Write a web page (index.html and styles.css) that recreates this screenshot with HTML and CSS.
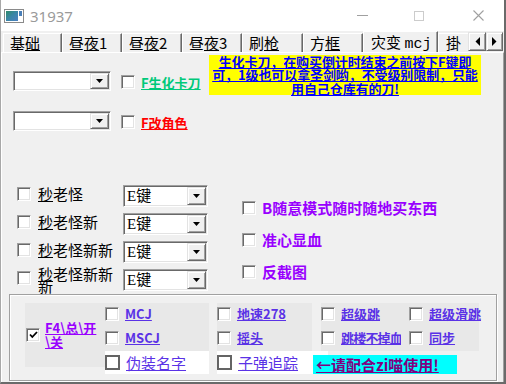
FILE: index.html
```html
<!DOCTYPE html>
<html>
<head>
<meta charset="utf-8">
<link rel="stylesheet" href="styles.css">
</head>
<body>
<div class="window">
  <div class="titlebar">
    <svg class="app-icon" width="20" height="14" viewBox="0 0 20 14">
      <defs>
        <linearGradient id="ig" x1="0" y1="0" x2="1" y2="1">
          <stop offset="0" stop-color="#2f8a6a"/>
          <stop offset="0.5" stop-color="#3a86a8"/>
          <stop offset="1" stop-color="#4c7fc0"/>
        </linearGradient>
      </defs>
      <rect x="0.5" y="0.5" width="19" height="13" fill="#fff" stroke="#8a8a8a"/>
      <rect x="2" y="2" width="12" height="10" fill="url(#ig)"/>
      <rect x="15" y="2" width="3" height="5" fill="#4a7fb8"/>
    </svg>
    <span class="title">31937</span>
    <div class="caption">
      <span class="cap-min"></span>
      <span class="cap-max"></span>
      <svg class="cap-close" width="11" height="11" viewBox="0 0 11 11"><path d="M0.5 0.5L10.5 10.5M10.5 0.5L0.5 10.5" stroke="#a0a0a0" stroke-width="1.1"/></svg>
    </div>
  </div>

  <div class="tabstrip">
    <div class="tab t59">基<u>础</u></div>
    <div class="tab">昼<u>夜</u>1</div>
    <div class="tab">昼<u>夜</u>2</div>
    <div class="tab">昼<u>夜</u>3</div>
    <div class="tab t61">刷<u>枪</u></div>
    <div class="tab">方<u>框</u></div>
    <div class="tab active">灾变 <span class="mono">mcj</span></div>
    <div class="tab partial">掛</div>
    <div class="scroller">
      <span class="sbtn"><svg width="5" height="9" viewBox="0 0 5 9"><path d="M5 0L0.5 4.5L5 9Z" fill="#000"/></svg></span>
      <span class="sbtn"><svg width="5" height="9" viewBox="0 0 5 9"><path d="M0 0L4.5 4.5L0 9Z" fill="#000"/></svg></span>
    </div>
  </div>

  <div class="panel">
    <div class="sec-top">
      <div class="combo-col">
        <div class="combo-row">
          <div class="combo sm"><span class="combo-text"></span><span class="combo-btn"><svg width="7" height="4" viewBox="0 0 7 4"><path d="M0 0H7L3.5 4Z" fill="#000"/></svg></span></div>
          <span class="cb"></span>
          <span class="lbl bold u green">F生化卡刀</span>
        </div>
        <div class="combo-row">
          <div class="combo sm"><span class="combo-text"></span><span class="combo-btn"><svg width="7" height="4" viewBox="0 0 7 4"><path d="M0 0H7L3.5 4Z" fill="#000"/></svg></span></div>
          <span class="cb"></span>
          <span class="lbl bold u red">F改角色</span>
        </div>
      </div>
      <div class="note">生化卡刀，在购买倒计时结束之前按下F键即<br>可，1级也可以拿圣剑哟，不受级别限制，只能<br>用自己仓库有的刀!</div>
    </div>

    <div class="sec-mid">
      <div class="keys">
        <div class="key-row">
          <span class="cb"></span>
          <span class="klbl"><u>秒</u>老怪</span>
          <div class="combo key"><span class="combo-text">E键</span><span class="combo-btn"><svg width="7" height="4" viewBox="0 0 7 4"><path d="M0 0H7L3.5 4Z" fill="#000"/></svg></span></div>
        </div>
        <div class="key-row">
          <span class="cb"></span>
          <span class="klbl"><u>秒</u>老怪新</span>
          <div class="combo key"><span class="combo-text">E键</span><span class="combo-btn"><svg width="7" height="4" viewBox="0 0 7 4"><path d="M0 0H7L3.5 4Z" fill="#000"/></svg></span></div>
        </div>
        <div class="key-row">
          <span class="cb"></span>
          <span class="klbl"><u>秒</u>老怪新新</span>
          <div class="combo key"><span class="combo-text">E键</span><span class="combo-btn"><svg width="7" height="4" viewBox="0 0 7 4"><path d="M0 0H7L3.5 4Z" fill="#000"/></svg></span></div>
        </div>
        <div class="key-row last">
          <span class="cb"></span>
          <span class="klbl tight"><u>秒</u>老怪新新新</span>
          <div class="combo key"><span class="combo-text">E键</span><span class="combo-btn"><svg width="7" height="4" viewBox="0 0 7 4"><path d="M0 0H7L3.5 4Z" fill="#000"/></svg></span></div>
        </div>
      </div>
      <div class="opts">
        <div class="opt-row"><span class="cb"></span><span class="olbl">B随意模式随时随地买东西</span></div>
        <div class="opt-row"><span class="cb"></span><span class="olbl">准心显血</span></div>
        <div class="opt-row"><span class="cb"></span><span class="olbl">反截图</span></div>
      </div>
    </div>

    <div class="group">
      <div class="f4">
        <span class="cb checked"><svg width="9" height="8" viewBox="0 0 9 8"><path d="M1 3.5L3.3 6L8 1" fill="none" stroke="#000" stroke-width="1.8"/></svg></span>
        <span class="f4lbl">F4\总\开<br>\关</span>
      </div>
      <div class="grid">
        <div class="cell c1"><span class="cb"></span><span class="glbl">MCJ</span></div>
        <div class="cell c2"><span class="cb"></span><span class="glbl">地速278</span></div>
        <div class="cell c3"><span class="cb"></span><span class="glbl">超级跳</span></div>
        <div class="cell c4"><span class="cb"></span><span class="glbl">超级滑跳</span></div>
        <div class="cell c1"><span class="cb"></span><span class="glbl">MSCJ</span></div>
        <div class="cell c2"><span class="cb"></span><span class="glbl">摇头</span></div>
        <div class="cell c3"><span class="cb"></span><span class="glbl narrow">跳楼不掉血</span></div>
        <div class="cell c4"><span class="cb"></span><span class="glbl">同步</span></div>
        <div class="wcell w1"><span class="fcb"></span><span class="wlbl">伪装名字</span></div>
        <div class="wcell w2"><span class="fcb"></span><span class="wlbl">子弹追踪</span></div>
        <div class="hint">←请配合zi喵使用!</div>
      </div>
    </div>
  </div>
</div>
</body>
</html>
```

FILE: styles.css
```css
* { box-sizing: border-box; }
html, body { margin: 0; padding: 0; }
body {
  width: 506px;
  height: 384px;
  overflow: hidden;
  background: #ffffff;
  font-family: "Noto Sans CJK SC", sans-serif;
}

.window {
  width: 506px;
  height: 384px;
  display: flex;
  flex-direction: column;
  background: #f0f0f0;
  border-left: 1px solid #a8a8a8;
  border-right: 2px solid #6a6a6a;
  border-bottom: 2px solid #6a6a6a;
  overflow: hidden;
}

/* title bar */
.titlebar {
  height: 31px;
  flex: none;
  background: #ffffff;
  display: flex;
  align-items: center;
}
.app-icon { margin-left: 3px; flex: none; }
.title {
  margin-left: 6px;
  font-family: "Noto Sans", sans-serif;
  font-size: 15px;
  color: #9a9a9a;
  line-height: 18px;
}
.caption {
  margin-left: auto;
  margin-right: 20px;
  display: flex;
  align-items: center;
}
.cap-min { width: 11px; height: 1px; background: #a0a0a0; }
.cap-max { width: 10px; height: 10px; border: 1px solid #cccccc; margin-left: 46px; }
.cap-close { margin-left: 49px; display: block; }

/* tabs */
.tabstrip {
  height: 21px;
  flex: none;
  display: flex;
  align-items: flex-end;
  padding-left: 2px;
  overflow: hidden;
}
.tab {
  width: 60px;
  height: 19px;
  flex: none;
  border-top: 1px solid #ffffff;
  border-left: 1px solid #ffffff;
  border-right: 1px solid #696969;
  box-shadow: inset -1px 0 #a0a0a0;
  background: #f0f0f0;
  font-size: 15px;
  line-height: 17px;
  padding-left: 6px;
  color: #000;
  white-space: nowrap;
  overflow: hidden;
}
.tab u { text-underline-offset: 1px; }
.tab.t59 { width: 59px; }
.tab.t61 { width: 61px; }
.tab.active {
  width: 75px;
  height: 21px;
  padding-left: 7px;
  padding-top: 1px;
}
.tab.partial { width: 30px; padding-left: 7px; border-right: none; box-shadow: none; }
.mono { font-family: "Liberation Mono", monospace; font-size: 15px; }
.scroller {
  display: flex;
  flex: none;
  height: 19px;
  margin-bottom: 1px;
}
.sbtn {
  width: 18px;
  height: 19px;
  background: #f0f0f0;
  border: 1px solid;
  border-color: #e3e3e3 #696969 #696969 #e3e3e3;
  box-shadow: inset 1px 1px #ffffff, inset -1px -1px #a0a0a0;
  display: flex;
  align-items: center;
  justify-content: center;
}
.sbtn + .sbtn { width: 17px; }

/* panel */
.panel {
  flex: 1;
  border-top: 1px solid #ffffff;
  border-left: 1px solid #ffffff;
  border-right: 1px solid #a0a0a0;
  display: flex;
  flex-direction: column;
}

/* classic controls */
.cb {
  width: 14px;
  height: 14px;
  flex: none;
  background: #ffffff;
  border: 1px solid;
  border-color: #a0a0a0 #ffffff #ffffff #a0a0a0;
  box-shadow: inset 1px 1px #696969, inset -1px -1px #e3e3e3;
  display: flex;
  align-items: center;
  justify-content: center;
}
.fcb {
  width: 15px;
  height: 15px;
  flex: none;
  border: 2px solid #646464;
  background: #ffffff;
}
.combo {
  display: flex;
  flex: none;
  background: #ffffff;
  border: 1px solid;
  border-color: #a0a0a0 #ffffff #ffffff #a0a0a0;
  box-shadow: inset 1px 1px #696969, inset -1px -1px #e3e3e3;
}
.combo-text {
  flex: 1;
  padding-left: 3px;
  font-family: "Liberation Serif", "Noto Sans CJK SC", serif;
  font-size: 15px;
  line-height: 20px;
  color: #000;
}
.combo-btn {
  width: 19px;
  margin: 1px;
  flex: none;
  background: #f0f0f0;
  border: 1px solid;
  border-color: #e3e3e3 #696969 #696969 #e3e3e3;
  box-shadow: inset 1px 1px #ffffff, inset -1px -1px #a0a0a0;
  display: flex;
  align-items: center;
  justify-content: center;
}
.combo-btn svg { display: block; }

.lbl { font-size: 13px; line-height: 18px; white-space: nowrap; }
.bold { font-weight: 700; }
.u { text-decoration: underline; }
.green { color: #00c97a; }
.red { color: #ff0000; }

/* top section */
.sec-top { display: flex; height: 80px; flex: none; }
.combo-col { width: 207px; padding-left: 11px; padding-top: 18px; flex: none; }
.combo-row { display: flex; align-items: flex-start; height: 40px; }
.combo.sm { width: 98px; height: 20px; }
.combo-row .cb { margin-left: 10px; margin-top: 4px; }
.combo-row .lbl { margin-left: 6px; margin-top: 3px; }
.note {
  margin-top: 2px;
  width: 272px;
  height: 40px;
  background: #ffff00;
  color: #0000ff;
  font-size: 13px;
  font-weight: 700;
  line-height: 13.3px;
  text-align: center;
  text-decoration: underline;
  padding-top: 0;
  letter-spacing: -0.1px;
  white-space: nowrap;
}

/* middle section */
.sec-mid { display: flex; height: 158px; flex: none; }
.keys { width: 206px; padding-left: 15px; padding-top: 52px; flex: none; }
.key-row { display: flex; align-items: flex-start; margin-bottom: 6px; }
.key-row.last { margin-bottom: 0; }
.key-row .cb { margin-top: 2px; }
.klbl {
  width: 85px;
  padding-right: 7px;
  margin-left: 7px;
  font-size: 15px;
  line-height: 18px;
  color: #000;
  flex: none;
}
.klbl.tight { line-height: 12px; margin-top: -1px; }
.klbl u { text-underline-offset: 1px; }
.combo.key { width: 85px; height: 22px; }
.opts { margin-left: 34px; padding-top: 59px; }
.opt-row { display: flex; align-items: center; height: 32px; }
.olbl {
  margin-left: 6px;
  font-size: 15px;
  font-weight: 700;
  line-height: 18px;
  color: #9900ff;
  white-space: nowrap;
}

/* group box */
.group {
  margin: 3px 0 0 7px;
  width: 488px;
  height: 87px;
  flex: none;
  border: 1px solid #a0a0a0;
  box-shadow: inset 1px 1px #ffffff, 1px 1px #ffffff;
  padding: 8px 0 0 15px;
  display: flex;
  align-items: flex-start;
}
.f4 {
  width: 80px;
  height: 64px;
  flex: none;
  background: #e8e8e8;
  display: flex;
  align-items: center;
}
.f4 .cb { margin-left: 1px; }
.f4lbl {
  margin-left: 5px;
  font-size: 13px;
  font-weight: 700;
  line-height: 14px;
  color: #9900ff;
  text-decoration: underline;
  white-space: nowrap;
}
.grid {
  display: grid;
  grid-template-columns: 112px 104px 80px 78px;
  grid-template-rows: 24px 24px 24px;
}
.cell {
  display: flex;
  align-items: center;
  padding-bottom: 2px;
  background: #e8e8e8;
}
.c1 { width: 104px; }
.c2 { width: 95px; }
.c3 { width: 80px; }
.c4 { width: 78px; padding-left: 8px; }
.glbl {
  margin-left: 6px;
  font-size: 13px;
  font-weight: 700;
  line-height: 14px;
  color: #5a32e6;
  text-decoration: underline;
  white-space: nowrap;
}
.glbl.narrow { letter-spacing: -0.8px; }
.wcell {
  display: flex;
  align-items: center;
  height: 23px;
  background: #ffffff;
}
.w1 { width: 104px; }
.w2 { width: 111px; }
.wlbl {
  margin-left: 6px;
  font-size: 15px;
  line-height: 18px;
  color: #5a32e6;
  text-decoration: underline;
  white-space: nowrap;
}
.hint {
  grid-column: 3 / 5;
  margin-left: -8px;
  margin-top: 4px;
  width: 144px;
  height: 19px;
  background: #00ffff;
  padding-left: 3px;
  font-size: 15px;
  font-weight: 700;
  line-height: 19px;
  color: #800080;
  text-decoration: underline;
  white-space: nowrap;
}
```
